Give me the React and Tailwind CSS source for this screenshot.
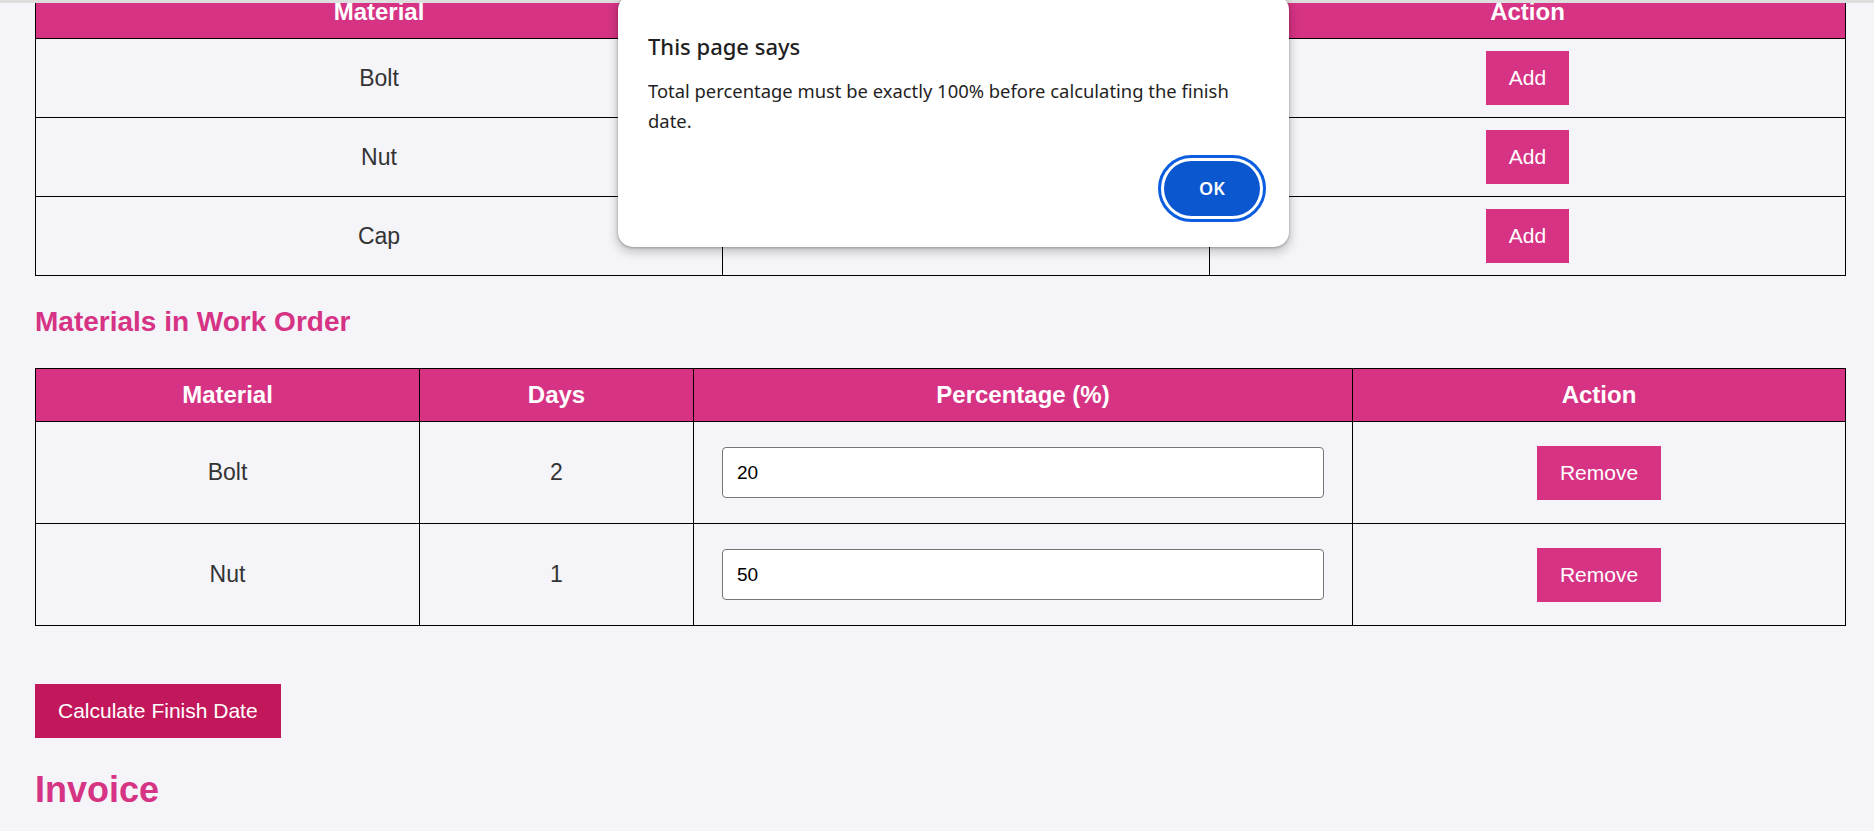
import React, { useState } from 'react'

const catalog = [
  { name: 'Bolt', days: 2 },
  { name: 'Nut', days: 1 },
  { name: 'Cap', days: 3 },
]

function AlertDialog() {
  return (
    <div className="absolute left-[618px] top-[-5px] z-20 flex w-[671px] flex-col rounded-[15px] bg-white pl-[30px] pr-[29px] pt-[36px] pb-[31px] font-['Noto_Sans',sans-serif] text-[#1f1f1f] shadow-[0_1px_3px_rgba(0,0,0,0.3),0_4px_8px_3px_rgba(0,0,0,0.15)]">
      <h3 className="text-[22px] font-medium leading-[30px]">This page says</h3>
      <p className="mt-[15px] text-[18.4px] leading-[30px]">
        Total percentage must be exactly 100% before calculating the finish
        <br />
        date.
      </p>
      <div className="mt-[25px] flex justify-end">
        <button className="h-[55px] w-[96px] rounded-full bg-[#0b57d0] text-[18px] font-semibold text-white outline-[3px] outline-offset-[3px] outline-[#0b5ee0] outline-solid">
          OK
        </button>
      </div>
    </div>
  )
}

export default function App() {
  const [workOrder, setWorkOrder] = useState([
    { name: 'Bolt', days: 2, pct: '20' },
    { name: 'Nut', days: 1, pct: '50' },
  ])

  const updatePct = (i, value) => {
    setWorkOrder((prev) => prev.map((m, idx) => (idx === i ? { ...m, pct: value } : m)))
  }

  const th = 'flex h-[53px] items-center justify-center border-r border-b border-black bg-[#d63384] text-[24px] font-bold text-white'
  const td = 'flex items-center justify-center border-r border-b border-black text-[23px] text-[#333]'
  const btn = 'h-[54px] bg-[#d63384] px-[23px] text-[21px] text-white'

  return (
    <div className="relative h-[831px] overflow-hidden bg-[#f4f4f9] font-['Liberation_Sans',Arial,sans-serif]">
      <div className="absolute inset-x-0 top-0 z-10 h-[3px] bg-[#dedede]" />
      <AlertDialog />

      <div className="-mt-[15px] pl-[35px] pr-[28px]">
        <div className="grid w-fit grid-cols-[687px_487px_636px] border-l border-t border-black">
          <div className={th}>Material</div>
          <div className={th}>Days</div>
          <div className={th}>Action</div>
          {catalog.map((m) => (
            <React.Fragment key={m.name}>
              <div className={td + ' h-[79px]'}>{m.name}</div>
              <div className={td + ' h-[79px]'}>{m.days}</div>
              <div className={td + ' h-[79px]'}>
                <button className={btn}>Add</button>
              </div>
            </React.Fragment>
          ))}
        </div>

        <h2 className="mt-[30px] text-[28px] font-bold leading-[32px] text-[#d63384]">Materials in Work Order</h2>

        <div className="mt-[30px] grid w-fit grid-cols-[384px_274px_659px_493px] border-l border-t border-black">
          <div className={th}>Material</div>
          <div className={th}>Days</div>
          <div className={th}>Percentage (%)</div>
          <div className={th}>Action</div>
          {workOrder.map((m, i) => (
            <React.Fragment key={m.name}>
              <div className={td + ' h-[102px]'}>{m.name}</div>
              <div className={td + ' h-[102px]'}>{m.days}</div>
              <div className={td + ' h-[102px] px-[28px]'}>
                <input
                  type="number"
                  value={m.pct}
                  onChange={(e) => updatePct(i, e.target.value)}
                  className="h-[51px] w-full rounded-[4px] border border-[#767676] bg-white px-[14px] text-[19px] text-black"
                />
              </div>
              <div className={td + ' h-[102px]'}>
                <button className={btn}>Remove</button>
              </div>
            </React.Fragment>
          ))}
        </div>

        <button className="mt-[58px] h-[54px] bg-[#c2185b] px-[23px] text-[21px] text-white">Calculate Finish Date</button>

        <h1 className="mt-[31px] text-[36px] font-bold leading-[41px] text-[#d63384]">Invoice</h1>
      </div>
    </div>
  )
}
